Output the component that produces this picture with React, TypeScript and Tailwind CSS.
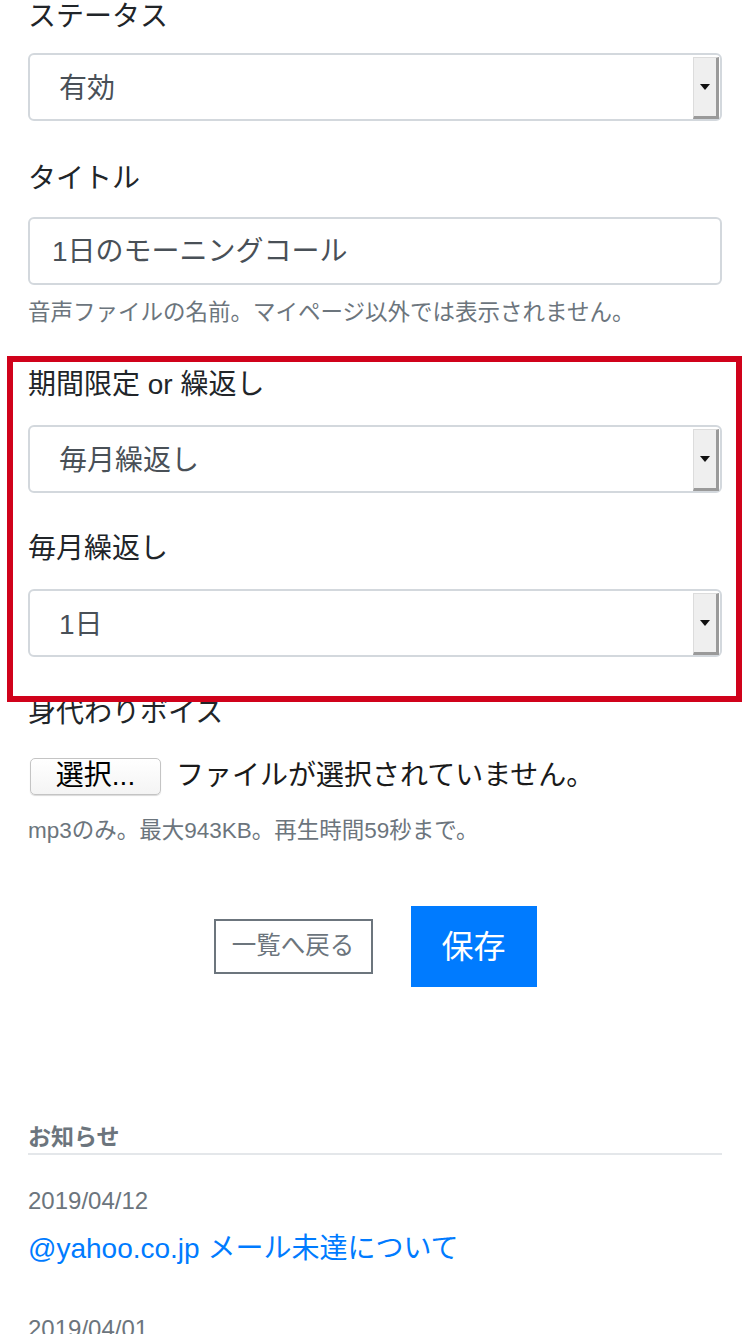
import type { FC } from "react";

const font = "font-['Liberation_Sans','Noto_Sans_CJK_JP',sans-serif]";

const SelectBox: FC<{ value: string }> = ({ value }) => (
  <div className="flex h-[68px] items-stretch rounded-[6px] border-2 border-[#d3d8dd] bg-white">
    <div className="flex flex-1 items-center pt-[3px] pl-[29px] text-[28px] text-[#495057]">{value}</div>
    <div className="mt-[2px] mr-[1px] flex w-[26px] items-center justify-center border-t border-l border-r-[3px] border-b-[3px] border-t-[#dcdcdc] border-l-[#dcdcdc] border-r-[#9a9a9a] border-b-[#9a9a9a] bg-[#efefef]">
      <svg width="10" height="6" viewBox="0 0 10 6">
        <path d="M0 0h10L5 6z" fill="#111" />
      </svg>
    </div>
  </div>
);

const Label: FC<{ text: string; className?: string }> = ({ text, className = "" }) => (
  <div className={`text-[28px] leading-[42px] text-[#212529] ${className}`}>{text}</div>
);

export default function App() {
  return (
    <div className={`min-h-[1334px] overflow-hidden bg-white ${font}`}>
      <div className="-mt-[4px] px-[28px]">
        <Label text="ステータス" className="mb-[15px]" />
        <SelectBox value="有効" />

        <Label text="タイトル" className="mt-[37px] mb-[17px]" />
        <div className="flex h-[68px] items-center rounded-[6px] border-2 border-[#d3d8dd] pt-[2px] pl-[22px] text-[28px] text-[#495057]">
          1日のモーニングコール
        </div>
        <div className="mt-[11px] text-[22.5px] leading-[34px] text-[#6c757d]">
          音声ファイルの名前。マイページ以外では表示されません。
        </div>

        <div className="relative mt-[34px]">
          <Label text="期間限定 or 繰返し" className="mb-[19px]" />
          <SelectBox value="毎月繰返し" />
          <Label text="毎月繰返し" className="mt-[35px] mb-[19px]" />
          <SelectBox value="1日" />
          <div className="pointer-events-none absolute -top-[8px] -right-[20px] -bottom-[45px] -left-[21px] z-10 border-[6px] border-[#d0021b]" />
        </div>

        <Label text="身代わりボイス" className="mt-[35px]" />
        <div className="mt-[21px] flex items-center">
          <div className="ml-[2px] flex h-[37px] w-[131px] items-center justify-center rounded-[5px] border border-[#c4c4c4] bg-gradient-to-b from-white to-[#f4f4f4] text-[28px] text-black shadow-[0_1px_1px_rgba(0,0,0,0.15)]">
            選択...
          </div>
          <span className="ml-[15px] text-[28px] text-[#1a1a1a]">ファイルが選択されていません。</span>
        </div>
        <div className="mt-[17px] text-[22.5px] leading-[34px] text-[#6c757d]">
          mp3のみ。最大943KB。再生時間59秒まで。
        </div>

        <div className="mt-[58px] flex items-center justify-center gap-[38px]">
          <div className="flex h-[55px] w-[159px] items-center justify-center border-2 border-[#6c757d] text-[24.5px] text-[#6c757d]">
            一覧へ戻る
          </div>
          <div className="flex h-[81px] w-[126px] items-center justify-center bg-[#007bff] text-[32px] text-white">
            保存
          </div>
        </div>

        <div className="mt-[135px] border-b-2 border-[#e4e7ea] pb-[1px] text-[23px] leading-[30px] font-bold text-[#6c757d]">
          お知らせ
        </div>
        <div className="mt-[28px] text-[24px] leading-[36px] text-[#6c757d]">2019/04/12</div>
        <div className="mt-[9px] text-[28px] leading-[42px] text-[#007bff]">@yahoo.co.jp メール未達について</div>
        <div className="mt-[41px] text-[24px] leading-[36px] text-[#6c757d]">2019/04/01</div>
      </div>
    </div>
  );
}
